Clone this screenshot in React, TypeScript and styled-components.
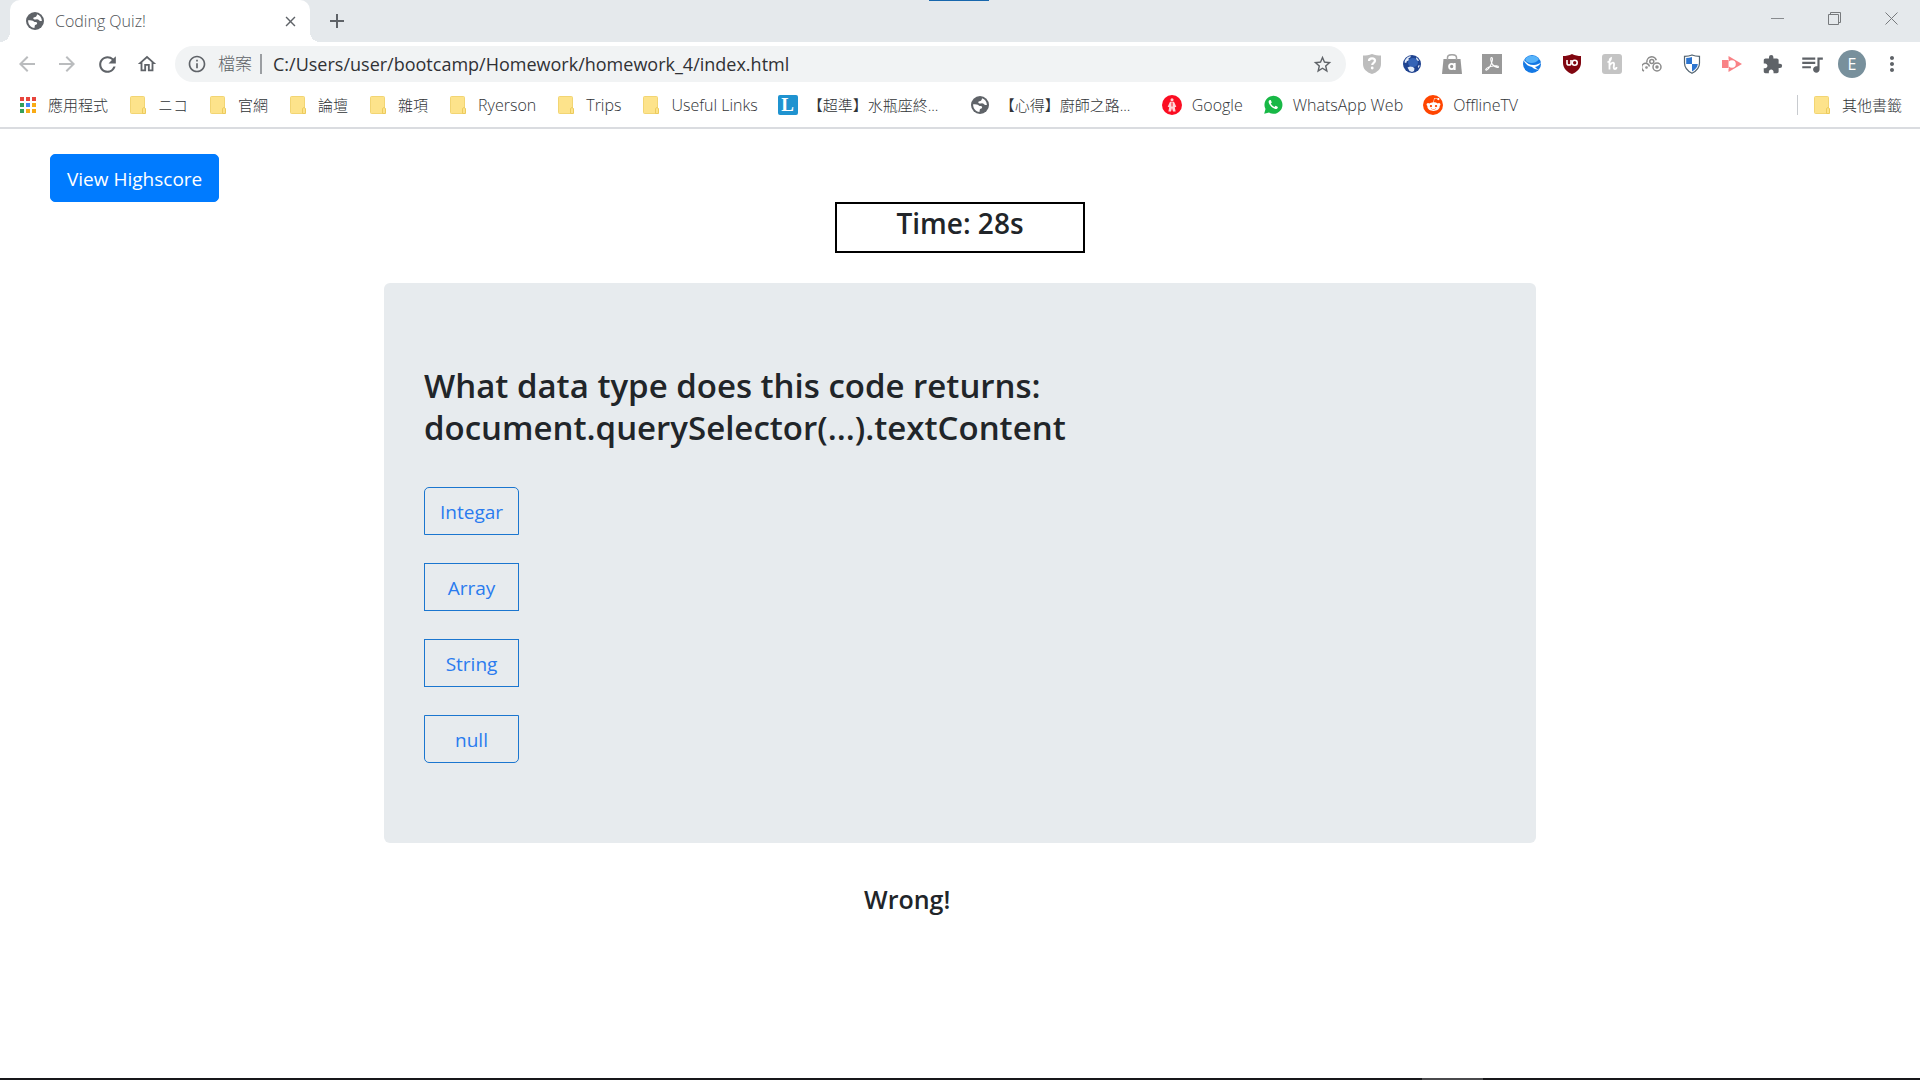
import React from "react";
import styled, { createGlobalStyle, css } from "styled-components";
import {
  MdArrowBack,
  MdArrowForward,
  MdRefresh,
  MdOutlineHome,
  MdInfoOutline,
  MdStarBorder,
  MdExtension,
  MdQueueMusic,
  MdMoreVert,
  MdClose,
  MdAdd,
} from "react-icons/md";
import { FaRedditAlien } from "react-icons/fa";

const uiFont = `"Open Sans", "Noto Sans CJK TC", sans-serif`;

const GlobalStyle = createGlobalStyle`
  *, *::before, *::after { box-sizing: border-box; }
  body { margin: 0; background: #fff; color: #212529; font-family: ${uiFont}; }
  button, input { font-family: inherit; }
  svg { display: block; flex: none; }
`;

const Screen = styled.div`
  display: flex;
  flex-direction: column;
  min-height: 100vh;
`;

const TabStrip = styled.header`
  position: relative;
  display: flex;
  height: 42px;
  padding-left: 10px;
  background: #e5e9ec;
`;

const TopMarker = styled.span`
  position: absolute;
  top: 0;
  left: 929px;
  width: 60px;
  height: 1px;
  background: #1767ad;
`;

const Tab = styled.div`
  position: relative;
  display: flex;
  align-items: center;
  gap: 10px;
  width: 300px;
  padding: 0 10px 0 15px;
  background: #fff;
  border-radius: 10px 10px 0 0;
  color: #505357;
  font-size: 16px;

  &::before,
  &::after {
    content: "";
    position: absolute;
    bottom: 0;
    width: 10px;
    height: 10px;
  }
  &::before {
    right: 100%;
    background: radial-gradient(circle at 0 0, transparent 10px, #fff 10px);
  }
  &::after {
    left: 100%;
    background: radial-gradient(circle at 100% 0, transparent 10px, #fff 10px);
  }
`;

const TabTitle = styled.span`
  flex: 1;
  font-weight: 300;
`;

const IconButton = styled.button<{ $size?: number; $color?: string }>`
  display: flex;
  align-items: center;
  justify-content: center;
  flex: none;
  width: ${(p) => p.$size ?? 40}px;
  height: ${(p) => p.$size ?? 40}px;
  padding: 0;
  border: 0;
  background: none;
  color: ${(p) => p.$color ?? "#5f6368"};
`;

const NewTab = styled(IconButton)`
  align-self: center;
  margin-left: 9px;
`;

const WindowControls = styled.div`
  display: flex;
  margin-left: auto;
`;

const WindowButton = styled(IconButton)`
  width: 57px;
  height: 37px;
`;

const Toolbar = styled.div`
  display: flex;
  align-items: center;
  height: 44px;
  padding: 0 8px 0 7px;
`;

const AddressBar = styled.form`
  display: flex;
  flex: 1;
  align-items: center;
  height: 36px;
  margin: 0 6px 0 8px;
  padding: 0 4px 0 12px;
  border-radius: 18px;
  background: #f1f3f4;
`;

const Scheme = styled.label`
  margin-left: 11px;
  padding-right: 8px;
  border-right: 2px solid #9b9ea2;
  color: #5f6368;
  font-size: 17px;
  font-weight: 300;
  line-height: 20px;
`;

const AddressInput = styled.input`
  flex: 1;
  min-width: 0;
  padding: 0 0 0 11px;
  border: 0;
  outline: 0;
  background: none;
  color: #303134;
  font-size: 18px;
`;

const Avatar = styled.span`
  display: flex;
  align-items: center;
  justify-content: center;
  width: 28px;
  height: 28px;
  border-radius: 50%;
  background: #78909c;
  color: #fff;
  font-size: 16px;
`;

const BookmarkBar = styled.nav`
  display: flex;
  align-items: center;
  gap: 20px;
  height: 43px;
  padding: 0 18px 4px;
  border-bottom: 2px solid #dadce0;
`;

const Bookmark = styled.a`
  display: flex;
  align-items: center;
  gap: 10px;
  color: #303336;
  font-size: 16px;
  font-weight: 300;
  line-height: 20px;
  text-decoration: none;
  white-space: nowrap;
`;

const BookmarkLabel = styled.span<{ $clipped?: boolean }>`
  min-width: ${(p) => (p.$clipped ? 142 : 0)}px;

  &:lang(zh) {
    font-size: 15px;
  }
`;

const OtherBookmarks = styled(Bookmark)`
  margin-left: auto;
  padding-left: 14px;
  border-left: 1px solid #c8cbcf;
`;

const Page = styled.main`
  flex: 1;
`;

const PageHeader = styled.div`
  padding: 25px 50px 0;
`;

const buttonText = css`
  height: 48px;
  border-radius: 5px;
  font-size: 19px;
  line-height: 30px;
`;

const HighscoreButton = styled.button`
  ${buttonText}
  display: block;
  padding: 2px 16px 0;
  border: 1px solid #007bff;
  background: #007bff;
  color: #fff;
`;

const Timer = styled.div`
  width: 250px;
  margin: 0 auto 30px;
  padding: 1px 0 10px;
  border: 2px solid #000;
  font-size: 28px;
  font-weight: 600;
  line-height: 36px;
  text-align: center;
`;

const QuizCard = styled.section`
  width: 60%;
  margin: 0 auto;
  padding: 82px 40px 80px;
  border-radius: 6px;
  background: #e7ebee;
`;

const Question = styled.h1`
  margin: 0 0 38px;
  font-size: 33px;
  font-weight: 600;
  line-height: 42px;
`;

const Answers = styled.div`
  display: inline-flex;
  flex-direction: column;
  gap: 28px;
  vertical-align: top;
`;

const Answer = styled.button`
  ${buttonText}
  padding: 1px 15px 0;
  border: 1px solid #1b76cf;
  border-radius: 0;
  background: none;
  color: #2a7bef;

  &:first-child { border-radius: 5px 5px 0 0; }
  &:last-child { border-radius: 0 0 5px 5px; }
`;

const Result = styled.p`
  margin: 40px 0 0;
  padding-left: 45%;
  font-size: 25px;
  font-weight: 600;
  line-height: 32px;
`;

const Taskbar = styled.footer`
  display: flex;
  justify-content: flex-end;
  height: 2px;
  padding-right: 437px;
  background: #18181b;
`;

const TaskbarItem = styled.span`
  width: 61px;
  background: #4a4a4c;
`;

const Globe = () => (
  <svg width="20" height="20" viewBox="0 0 20 20">
    <circle cx="10" cy="10" r="9" fill="#5f6368" />
    <path d="M12 3.200c3 .9 4.800 3.600 4.900 6.800-1 .2-1.900.1-2.600-.5-.8-.8-1.800-1.300-3-1.100-1.400.2-2.800.1-3-1-.1-1 .9-1.400 2-1.500 1-.1 1.600-1.300 1.700-2.700z" fill="#fff" />
    <path d="M3.100 9.300c1.800-.3 3.400-.2 4.700.4 1 .5 1.200 1.300 2.500 1.300 1.200 0 2 .5 1.800 1.500-.2 1.100-1.300 1.100-1.900 1.600-.7.600-.3 1.800-.8 2.800-3.600-.200-6.400-3.500-6.300-7.600z" fill="#fff" />
  </svg>
);

const Folder = () => (
  <svg width="20" height="20" viewBox="0 0 20 20">
    <rect x="2.500" y="1.500" width="14" height="17" rx="1" fill="#fde38b" stroke="#f2d573" />
    <path d="M14.500 18.500v-5l1.500-1 1.500 1v5z" fill="#fde38b" stroke="#eccb5c" />
  </svg>
);

const appColors = ["#e8453c", "#e8453c", "#e8453c", "#34a05a", "#4285f4", "#f9ab15", "#34a05a", "#f9ab15", "#f9ab15"];

const AppsGrid = () => (
  <svg width="20" height="20" viewBox="0 0 20 20">
    {appColors.map((color, i) => (
      <rect key={i} x={2 + (i % 3) * 6} y={2 + Math.floor(i / 3) * 6} width="4" height="4" fill={color} />
    ))}
  </svg>
);

const LetterTile = styled.span`
  display: flex;
  align-items: center;
  justify-content: center;
  width: 20px;
  height: 20px;
  border-radius: 2px;
  background: #1f93d0;
  color: #fff;
  font: 700 19px/20px "Liberation Serif", serif;
`;

const Disc = styled.span<{ $color: string }>`
  display: flex;
  align-items: center;
  justify-content: center;
  width: 20px;
  height: 20px;
  border-radius: 50%;
  background: ${(p) => p.$color};
  color: #fff;
`;

const RedFigure = () => (
  <Disc $color="#fb0d22">
    <svg width="14" height="16" viewBox="0 0 14 16">
      <circle cx="7" cy="2.800" r="1.500" fill="#ffd5d8" />
      <path d="M5 4.800h4l2.300 5-1.500.4.800 4.300H8L7 11l-1 3.500H3.400l.8-4.300-1.500-.4z" fill="#ffd5d8" />
      <path d="M7 5.500v4" stroke="#fb0d22" />
    </svg>
  </Disc>
);

const WhatsApp = () => (
  <svg width="20" height="20" viewBox="0 0 20 20">
    <path d="M1.200 18.800 2.500 14A9 9 0 1 1 6 17.600z" fill="#18b846" />
    <path d="M6.300 5.200c-1 1-.9 2.500.3 4.300 1.400 2.300 3.300 4 5.700 4.500 1.500.2 2.600-.7 2.600-2.100l-2.300-1.200-1.200 1.300c-1.700-.7-2.900-1.900-3.600-3.400l1-1.200-1-2.300z" fill="#fff" />
  </svg>
);

const PrivacyShield = () => (
  <svg width="20" height="20" viewBox="0 0 20 20">
    <path d="M10 0c3 1.200 6 1.500 9 1.500V10c0 5-3.500 8.200-9 10-5.500-1.800-9-5-9-10V1.500C4 1.500 7 1.200 10 0z" fill="#bdbdbd" />
    <path d="M7 7c0-1.700 1.200-2.600 3-2.600s3 1 3 2.400c0 2-2.800 2-2.800 4.200" fill="none" stroke="#fff" strokeWidth="2.200" />
    <circle cx="10.200" cy="14" r="1.400" fill="#fff" />
  </svg>
);

const Earth = () => (
  <svg width="20" height="20" viewBox="0 0 20 20">
    <circle cx="10" cy="10" r="9" fill="#1f4390" />
    <ellipse cx="11" cy="8.500" rx="5" ry="4.500" fill="#3463b6" />
    <path d="M2.800 6.800C4 4 6 2.400 8.800 2L8.300 3.500 6.500 4.300l.3 1.900-2 1L4.200 9 2.600 8.500zM14 3.200c1.400.9 2.400 2 3 3.500l-1.200.3L14.200 5zM5.500 13.500l2.500-1 3 .5 1.500 1.500-.5 2.500-2 1-2.500-1zM16.800 11l.9.500-1 2.500-.9-1.200z" fill="#e3ebf7" />
  </svg>
);

const ShoppingBag = () => (
  <svg width="20" height="20" viewBox="0 0 20 20">
    <path d="M1.500 5h17L20 20H0z" fill="#979797" />
    <path d="M5.500 6V3.500C5.500-.2 14.500-.2 14.500 3.500V6" fill="none" stroke="#a5a5a5" strokeWidth="1.500" />
    <circle cx="9.700" cy="12.500" r="2.600" fill="none" stroke="#fff" strokeWidth="1.900" />
    <path d="M12.700 9v7" stroke="#fff" strokeWidth="1.900" />
  </svg>
);

const PdfTile = () => (
  <svg width="20" height="20" viewBox="0 0 20 20">
    <rect width="20" height="20" fill="#999" />
    <path d="M9.500 3.500c1.800 0 .8 5-1.300 8.500-1.500 2.600-3.300 4.500-4.200 4-1.200-.8 2-3 5.500-3.700 3.500-.8 7-.6 7 .7 0 1.200-3.300.3-5.500-2-2.300-2.300-2.800-7.500-1.500-7.500z" fill="none" stroke="#fff" strokeWidth="1.100" />
  </svg>
);

const BlueSphere = () => (
  <svg width="20" height="20" viewBox="0 0 20 20">
    <circle cx="10" cy="10" r="9" fill="#1478e4" />
    <path d="M3 5c3-4.500 11-4.500 14 0-2 3-5 4-7.500 4S4 8 3 5z" fill="#57b3fa" />
    <path d="M1 4.500c2.500 4 6.500 6.800 11 6.500 3-.2 5.500-1.300 7.500-3-1.800 3-4 4.500-6.500 5 1.200 1.300 2.500 2.200 4 3-3-.4-5.300-1.300-7-3C6 12.500 2.500 9.500 1 4.500z" fill="#fff" />
  </svg>
);

const UblockShield = () => (
  <svg width="20" height="20" viewBox="0 0 20 20">
    <path d="M10 0c3 1.500 6 2 9 2v7c0 5-4 9-9 11C5 18 1 14 1 9V2c3 0 6-.5 9-2z" fill="#800610" />
    <path d="M5 6v3.500c0 2 4 2 4 0V6m0 3.500" fill="none" stroke="#fff" strokeWidth="1.600" />
    <circle cx="12.700" cy="8.700" r="2.500" fill="none" stroke="#fff" strokeWidth="1.600" />
  </svg>
);

const HoneyTile = () => (
  <svg width="20" height="20" viewBox="0 0 20 20">
    <rect width="20" height="20" rx="3" fill="#c4c4c4" />
    <path d="M5.500 8c2 0 3.500-2 3.500-4-2 .5-1.500 4-1.500 11.500M8 11c2-3.500 4.500-3 4 0-.4 2.500-.5 4 .8 4 1 0 1.700-1 1.700-2" fill="none" stroke="#fff" strokeWidth="1.800" />
  </svg>
);

const Rings = () => (
  <svg width="20" height="20" viewBox="0 0 20 20" fill="none" stroke="#8b8b8b" strokeWidth="1.500">
    <path d="M2 17a4 4 0 1 1 5.500-4.500M5 8.500a4.800 4.800 0 0 1 9.300-2.300" />
    <circle cx="9.800" cy="7.500" r="2" />
    <circle cx="15" cy="13" r="4" />
    <circle cx="15" cy="13" r="1" />
    <circle cx="4.500" cy="13.500" r=".6" />
  </svg>
);

const CheckeredShield = () => (
  <svg width="20" height="20" viewBox="0 0 20 20">
    <path d="M10 1c2.500 1 5 1.300 7.500 1.300V9c0 5-3 8-7.500 10.300C5.500 17 2.500 14 2.500 9V2.300C5 2.300 7.500 2 10 1z" fill="#fff" stroke="#53636f" strokeWidth="1.200" />
    <path d="M10 3v7H4.200V4C6.200 4 8.200 3.600 10 3zM10 10h5.800c-.3 3.500-2.500 5.600-5.800 7.500z" fill="#2c74cf" />
  </svg>
);

const Recorder = () => (
  <svg width="20" height="20" viewBox="0 0 20 20">
    <path d="M6.500 2 20 10 6.500 18z" fill="#f98286" />
    <circle cx="10" cy="10" r="3.800" fill="#fff" />
    <path d="M5.500 5v10" stroke="#fff" strokeWidth="2" />
    <path d="M0 6h6.500v8H0z" fill="#f98286" />
  </svg>
);

const Minimize = () => (
  <svg width="14" height="14" viewBox="0 0 14 14"><path d="M0 6.500h13" stroke="#888b8e" /></svg>
);

const Restore = () => (
  <svg width="14" height="14" viewBox="0 0 14 14" fill="none" stroke="#777a7d">
    <path d="M.5 2.500h10v10H.5zM2.500 2.500v-2h10v10h-2" />
  </svg>
);

const CloseWindow = () => (
  <svg width="14" height="14" viewBox="0 0 14 14"><path d="m.500.500 12 12M12.500.500l-12 12" stroke="#777a7d" /></svg>
);

const extensions = [
  { name: "Privacy", Icon: PrivacyShield },
  { name: "Earth", Icon: Earth },
  { name: "Shopping", Icon: ShoppingBag },
  { name: "PDF", Icon: PdfTile },
  { name: "Browser", Icon: BlueSphere },
  { name: "Ad blocker", Icon: UblockShield },
  { name: "Coupons", Icon: HoneyTile },
  { name: "Rings", Icon: Rings },
  { name: "Security", Icon: CheckeredShield },
  { name: "Recorder", Icon: Recorder },
];

const RedditIcon = () => (
  <Disc $color="#ff4500"><FaRedditAlien size={15} /></Disc>
);

const LetterL = () => <LetterTile>L</LetterTile>;

const bookmarks = [
  { label: "應用程式", Icon: AppsGrid, lang: "zh" },
  { label: "ニコ", Icon: Folder, lang: "zh" },
  { label: "官網", Icon: Folder, lang: "zh" },
  { label: "論壇", Icon: Folder, lang: "zh" },
  { label: "雜項", Icon: Folder, lang: "zh" },
  { label: "Ryerson", Icon: Folder },
  { label: "Trips", Icon: Folder },
  { label: "Useful Links", Icon: Folder },
  { label: "【超準】水瓶座終...", Icon: LetterL, lang: "zh", clipped: true },
  { label: "【心得】廚師之路...", Icon: Globe, lang: "zh", clipped: true },
  { label: "Google", Icon: RedFigure },
  { label: "WhatsApp Web", Icon: WhatsApp },
  { label: "OfflineTV", Icon: RedditIcon },
];

const answers = ["Integar", "Array", "String", "null"];

export default function App() {
  return (
    <Screen>
      <GlobalStyle />
      <TabStrip>
        <Tab>
          <Globe />
          <TabTitle>Coding Quiz!</TabTitle>
          <IconButton $size={20} aria-label="Close tab"><MdClose size={17} /></IconButton>
        </Tab>
        <NewTab $size={36} aria-label="New tab"><MdAdd size={24} /></NewTab>
        <WindowControls>
          <WindowButton aria-label="Minimize"><Minimize /></WindowButton>
          <WindowButton aria-label="Restore"><Restore /></WindowButton>
          <WindowButton aria-label="Close"><CloseWindow /></WindowButton>
        </WindowControls>
        <TopMarker />
      </TabStrip>

      <Toolbar>
        <IconButton $color="#babcbe" aria-label="Back"><MdArrowBack size={24} /></IconButton>
        <IconButton $color="#babcbe" aria-label="Forward"><MdArrowForward size={24} /></IconButton>
        <IconButton aria-label="Reload"><MdRefresh size={25} /></IconButton>
        <IconButton aria-label="Home"><MdOutlineHome size={22} /></IconButton>
        <AddressBar onSubmit={(e) => e.preventDefault()}>
          <MdInfoOutline size={20} color="#5f6368" />
          <Scheme htmlFor="address">檔案</Scheme>
          <AddressInput id="address" defaultValue="C:/Users/user/bootcamp/Homework/homework_4/index.html" />
          <IconButton type="button" aria-label="Bookmark this page"><MdStarBorder size={21} /></IconButton>
        </AddressBar>
        {extensions.map(({ name, Icon }) => (
          <IconButton key={name} aria-label={name}><Icon /></IconButton>
        ))}
        <IconButton aria-label="Extensions"><MdExtension size={21} /></IconButton>
        <IconButton aria-label="Media"><MdQueueMusic size={26} /></IconButton>
        <IconButton aria-label="Profile"><Avatar>E</Avatar></IconButton>
        <IconButton aria-label="Menu"><MdMoreVert size={24} /></IconButton>
      </Toolbar>

      <BookmarkBar>
        {bookmarks.map(({ label, Icon, lang, clipped }) => (
          <Bookmark key={label} href="#">
            <Icon />
            <BookmarkLabel lang={lang} $clipped={clipped}>{label}</BookmarkLabel>
          </Bookmark>
        ))}
        <OtherBookmarks href="#">
          <Folder />
          <BookmarkLabel lang="zh">其他書籤</BookmarkLabel>
        </OtherBookmarks>
      </BookmarkBar>

      <Page>
        <PageHeader>
          <HighscoreButton>View Highscore</HighscoreButton>
        </PageHeader>
        <Timer>Time: 28s</Timer>
        <QuizCard>
          <Question>
            What data type does this code returns:
            <br />
            document.querySelector(...).textContent
          </Question>
          <Answers>
            {answers.map((answer) => (
              <Answer key={answer}>{answer}</Answer>
            ))}
          </Answers>
        </QuizCard>
        <Result>Wrong!</Result>
      </Page>
      <Taskbar><TaskbarItem /></Taskbar>
    </Screen>
  );
}
